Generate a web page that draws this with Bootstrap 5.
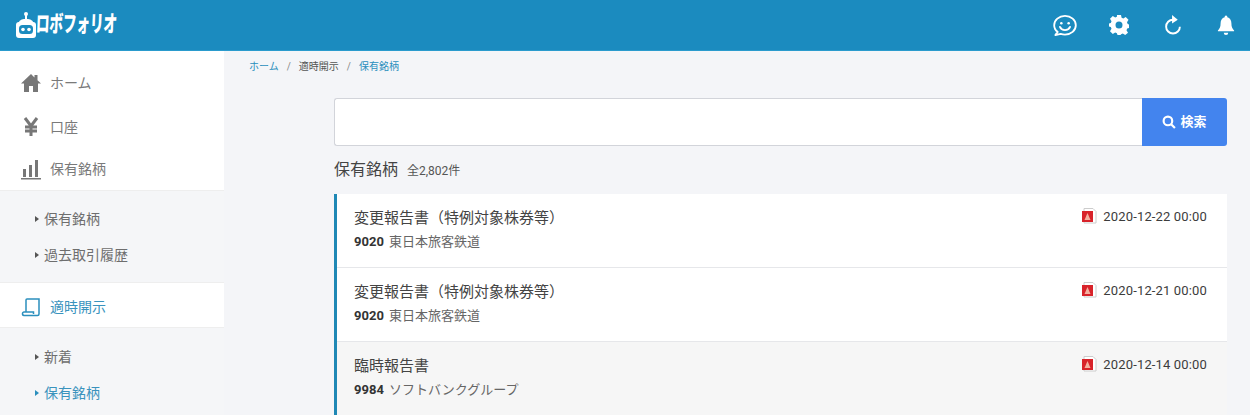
<!DOCTYPE html>
<html lang="ja"><head><meta charset="utf-8">
<title>ロボフォリオ</title>
<link href="https://cdn.jsdelivr.net/npm/bootstrap@5.3.0/dist/css/bootstrap.min.css" rel="stylesheet">
<style>
html,body{height:415px;overflow:hidden}
body{font-family:"Roboto","Noto Sans CJK JP",sans-serif;background:#f4f5f8;color:#333}
.topbar{height:51px;background:#1b8bbf;border-bottom:1px solid #2a9bcd}
.brand-wrap{width:82px;margin-left:0;overflow:visible}
.brand-name{display:inline-block;font-family:"Noto Sans CJK JP",sans-serif;font-weight:900;font-size:23px;color:#fff;letter-spacing:-.5px;line-height:1;white-space:nowrap;transform:scaleX(.6) skewX(-4deg);transform-origin:left center}
.top-icons{padding-right:15px}
.icon-gear{margin-left:32px}
.icon-next{margin-left:35px}
.sidebar{width:224px;flex:none;height:364px;overflow:hidden;background:#fff}
.side-top{height:10px}
.side-main{height:44px;padding-left:21px;gap:9px;color:#7a7a7a;font-size:14px}
.side-main svg{width:20px;height:20px;flex:none}
.side-main.short{height:41px}
.side-main.active{color:#3a93bd;padding-top:4px}
.side-sub{background:#f5f6f8;padding:10px 0 9px 35px;border-top:1px solid #eee;border-bottom:1px solid #eee;font-size:14px;color:#6e6e6e}
.side-sub.low{padding-top:11px}
.side-sub div{height:36px;display:flex;align-items:center;gap:5px}
.side-sub div::before{content:"";border-left:4px solid #555;border-top:3px solid transparent;border-bottom:3px solid transparent}
.side-sub .cur{color:#3a93bd}
.side-sub .cur::before{border-left-color:#2b8fbd}
.main-area{min-width:0;padding:0 23px 0 25px}
.crumbs{font-size:10px;height:30px;padding-top:1px;color:#555}
.crumbs a{color:#2b8fbd;text-decoration:none}
.crumbs i{font-style:normal;color:#888;margin:0 8px}
.inner-col{margin-left:85px}
.search-box{height:48px;margin-top:17px}
.search-input{flex:1;background:#fff;border:1px solid #d2d4da;border-right:0;border-radius:3px 0 0 3px}
.search-btn{width:85px;background:#4384ee;color:#fff;border-radius:0 3px 3px 0;font-size:13px;font-weight:700;gap:4px}
.page-title{font-size:16px;font-weight:400;height:48px;gap:9px;color:#444}
.page-title small{font-size:12px;font-weight:400;color:#555;padding-top:2px}
.report-list{border-left:3px solid #1f88b5;background:#fff}
.report-row{height:74px;padding:12px 20px 0 17px;border-bottom:1px solid #e6e7ea}
.report-row.alt{background:#f6f6f6}
.report-title{font-size:15px;color:#444;line-height:24px}
.report-sub{font-size:13px;color:#666;line-height:24px;margin-top:0}
.report-sub b{color:#333;font-weight:700;margin-right:2px}
.report-date{font-size:13px;font-weight:400;color:#3c3c3c;gap:6px;line-height:24px;margin-top:-1px;letter-spacing:.15px}
.report-date svg{margin-top:3px}
</style></head>
<body>
<header class="topbar d-flex align-items-center justify-content-between">
  <div class="d-flex align-items-center ps-3">
    <svg width="20" height="28" viewBox="0 0 20 28" aria-hidden="true"><circle cx="10" cy="3" r="2" fill="#fff"/><rect x="9" y="3" width="2" height="5" fill="#fff"/><path d="M2 17v-3a6 6 0 0 1 6-6h4a6 6 0 0 1 6 6v3z" fill="#fff"/><rect x="0" y="11" width="20" height="16" rx="3" fill="#fff"/><rect x="3" y="14" width="14" height="9" rx="3.500" fill="#1b8bbf"/><circle cx="7" cy="18.500" r="1.800" fill="#fff"/><circle cx="13" cy="18.500" r="1.800" fill="#fff"/></svg>
    <div class="brand-wrap"><span class="brand-name">ロボフォリオ</span></div>
  </div>
  <div class="top-icons d-flex align-items-center">
    <svg width="24" height="22" viewBox="0 0 26 24" fill="none" stroke="#fff" stroke-width="2" aria-hidden="true"><path d="M5 19.500C2.500 17.800 1.200 15.200 1.200 12.300 1.200 6.600 6.400 2 13 2s11.800 4.600 11.800 10.300S19.600 22.500 13 22.500c-1.700 0-3.300-.3-4.700-.8L2.500 23z" stroke-linejoin="round"/><circle cx="9" cy="10" r="1.400" fill="#fff" stroke="none"/><circle cx="17" cy="10" r="1.400" fill="#fff" stroke="none"/><path d="M7.500 14c1 2.400 3 3.500 5.500 3.500s4.500-1.100 5.500-3.500" stroke-linecap="round"/></svg>
    <svg class="icon-gear" width="20" height="20" viewBox="0 0 20 20" aria-hidden="true"><path fill="#fff" fill-rule="evenodd" d="M8 0h4l.6 2.800 1.700.7L16.700 2l2.800 2.800-1.500 2.400.7 1.700L20 9.500v3.500l-1.800.6-.7 1.700 1.500 2.400-2.800 2.300-2.400-1.500-1.700.7L11.500 20h-3l-.6-1.800-1.700-.7-2.400 1.500L1 16.200l1.500-2.400-.7-1.700L0 11.500v-3l1.800-.6.700-1.700L1 3.800 3.800 1l2.400 1.500 1.700-.7zM10 6.500a3.500 3.500 0 1 0 0 7 3.500 3.500 0 0 0 0-7z"/></svg>
    <svg class="icon-next" width="18" height="21" viewBox="0 0 18 22" fill="none" aria-hidden="true"><path d="M9 5a7.200 7.200 0 1 0 7.200 7.200" stroke="#fff" stroke-width="2"/><path d="M8 0l6 5-6 4z" fill="#fff"/></svg>
    <svg class="icon-next" width="18" height="21" viewBox="0 0 20 22" aria-hidden="true"><path fill="#fff" d="M10 0a1.500 1.500 0 0 1 1.500 1.700C14.500 2.500 16 5 16 8.500c0 4 1 6 3 8v1H1v-1c2-2 3-4 3-8 0-3.500 1.500-6 4.500-6.800A1.500 1.500 0 0 1 10 0zM7.500 19h5a2.500 2.500 0 0 1-5 0z"/></svg>
  </div>
</header>
<div class="d-flex">
  <nav class="sidebar">
    <div class="side-top"></div>
    <div class="side-main d-flex align-items-center"><svg viewBox="0 0 20 20" aria-hidden="true"><path fill="#777" d="M10 1L0 10.500h3V19h5v-6h4v6h5v-8.500h3l-3.500-3.300V2h-3v2.400z"/></svg><span>ホーム</span></div>
    <div class="side-main d-flex align-items-center"><svg viewBox="0 0 20 20" aria-hidden="true"><path fill="none" stroke="#777" stroke-width="3" d="M4 1l6 8 6-8M10 9v10M4 10h12M4 14h12"/></svg><span>口座</span></div>
    <div class="side-main short d-flex align-items-center"><svg viewBox="0 0 20 20" aria-hidden="true"><path fill="#777" d="M2 9h3v8H2zM8 5h3v12H8zM14 0h3v17h-3zM0 18h20v1.500H0z"/></svg><span>保有銘柄</span></div>
    <div class="side-sub"><div>保有銘柄</div><div>過去取引履歴</div></div>
    <div class="side-main active d-flex align-items-center"><svg viewBox="0 0 20 20" fill="none" stroke="#2b8fbd" stroke-width="1.500" aria-hidden="true"><path d="M5 15V3a1 1 0 0 1 1-1h12v15a1.500 1.500 0 0 1-1.500 1.500H3A1.800 1.800 0 0 1 1.500 16.500 1.500 1.500 0 0 1 3 15h9.500v2"/></svg><span>適時開示</span></div>
    <div class="side-sub low"><div>新着</div><div class="cur">保有銘柄</div></div>
  </nav>
  <main class="main-area flex-grow-1">
    <div class="crumbs d-flex align-items-center"><a href="#">ホーム</a><i>/</i><span>適時開示</span><i>/</i><a href="#">保有銘柄</a></div>
    <div class="inner-col">
      <div class="search-box d-flex">
        <div class="search-input"></div>
        <div class="search-btn d-flex align-items-center justify-content-center">
          <svg width="14" height="14" viewBox="0 0 13 13" fill="none" stroke="#fff" stroke-width="2" aria-hidden="true"><circle cx="5.500" cy="5.500" r="4"/><path d="M8.500 8.500L12 12"/></svg><span>検索</span>
        </div>
      </div>
      <div class="page-title d-flex align-items-center"><span>保有銘柄</span><small>全2,802件</small></div>
      <div class="report-list">
        <div class="report-row d-flex justify-content-between">
          <div><div class="report-title">変更報告書（特例対象株券等）</div><div class="report-sub"><b>9020</b> 東日本旅客鉄道</div></div>
          <div class="report-date d-flex align-items-start"><svg width="16" height="16" viewBox="0 0 16 16" aria-hidden="true"><path d="M3 .5h9l3 3V15H3z" fill="#fff" stroke="#ccc"/><rect x="1" y="3" width="11" height="11" fill="#d8232a"/><path d="M6.500 5L3.500 12h6z" fill="#f4b0a0"/></svg><span>2020-12-22 00:00</span></div>
        </div>
        <div class="report-row d-flex justify-content-between">
          <div><div class="report-title">変更報告書（特例対象株券等）</div><div class="report-sub"><b>9020</b> 東日本旅客鉄道</div></div>
          <div class="report-date d-flex align-items-start"><svg width="16" height="16" viewBox="0 0 16 16" aria-hidden="true"><path d="M3 .5h9l3 3V15H3z" fill="#fff" stroke="#ccc"/><rect x="1" y="3" width="11" height="11" fill="#d8232a"/><path d="M6.500 5L3.500 12h6z" fill="#f4b0a0"/></svg><span>2020-12-21 00:00</span></div>
        </div>
        <div class="report-row alt d-flex justify-content-between">
          <div><div class="report-title">臨時報告書</div><div class="report-sub"><b>9984</b> ソフトバンクグループ</div></div>
          <div class="report-date d-flex align-items-start"><svg width="16" height="16" viewBox="0 0 16 16" aria-hidden="true"><path d="M3 .5h9l3 3V15H3z" fill="#fff" stroke="#ccc"/><rect x="1" y="3" width="11" height="11" fill="#d8232a"/><path d="M6.500 5L3.500 12h6z" fill="#f4b0a0"/></svg><span>2020-12-14 00:00</span></div>
        </div>
      </div>
    </div>
  </main>
</div>
<script src="https://cdn.jsdelivr.net/npm/bootstrap@5.3.0/dist/js/bootstrap.bundle.min.js"></script>
</body></html>
